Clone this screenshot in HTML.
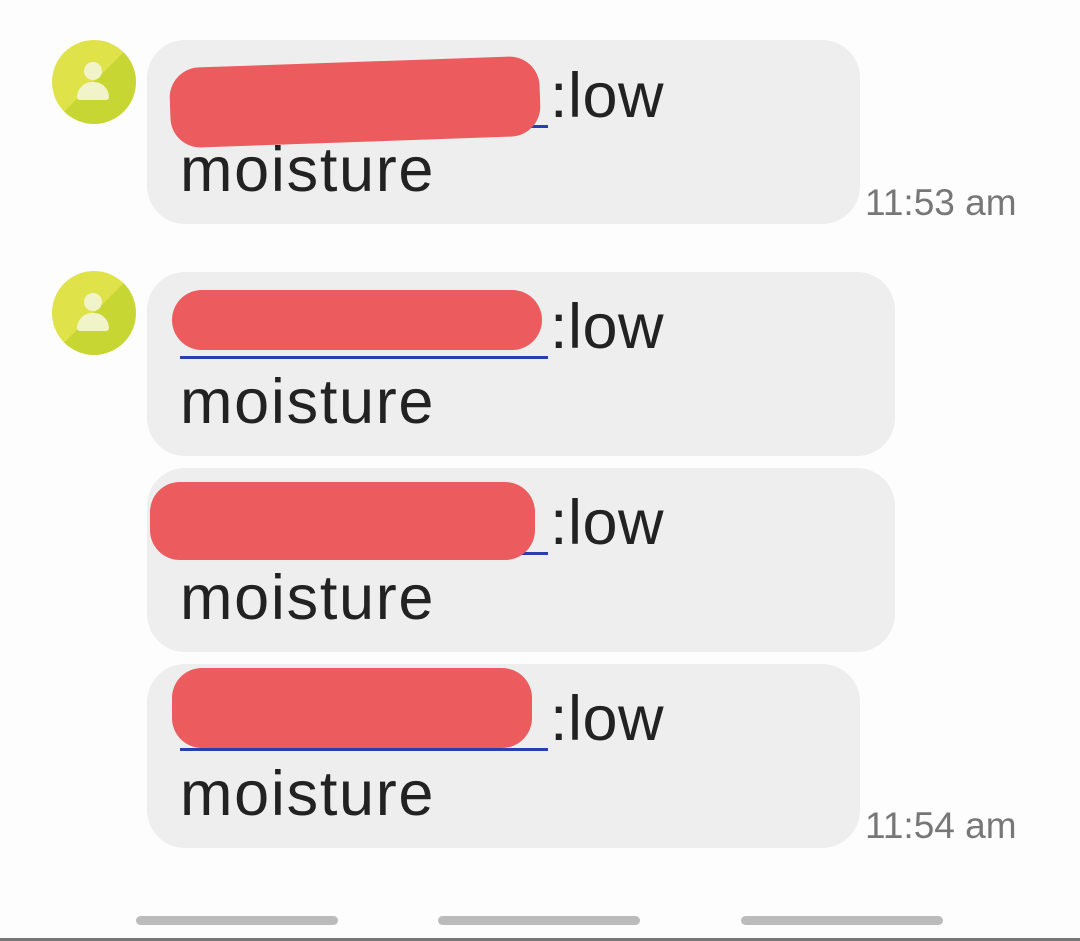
<!DOCTYPE html><html><head><style>
body{margin:0;width:1080px;height:941px;background:#fdfdfd;position:relative;overflow:hidden;font-family:"Liberation Sans",Roboto,sans-serif}
.b{position:absolute;left:147px;height:184px;background:#eeeeee;border-radius:38px}
.t{position:absolute;left:180px;font-size:63px;color:#222;line-height:1;letter-spacing:1.7px}
.ln{position:absolute;left:180px;width:368px;height:3px;background:#2a3fae}
.r{position:absolute;background:#ec5b5d;border-radius:30px}
.ts{position:absolute;left:865px;font-size:37px;color:#777}
.av{position:absolute;left:52px;width:84px;height:84px;border-radius:50%;background:linear-gradient(135deg,#e0e24a 50%,#c8d634 50%);overflow:hidden}
.av i{position:absolute;left:32px;top:22px;width:18px;height:18px;border-radius:50%;background:#f1f3c8}
.av u{position:absolute;left:25px;top:42px;width:32px;height:18px;border-radius:16px 16px 3px 3px;background:#f1f3c8}
.nb{position:absolute;top:916px;width:202px;height:9px;border-radius:5px;background:#bbb}
</style></head><body>
<div class="av" style="top:40px"><i></i><u></u></div>
<div class="av" style="top:271px"><i></i><u></u></div>
<div class="b" style="top:40px;width:713px"></div>
<div class="b" style="top:272px;width:748px"></div>
<div class="b" style="top:468px;width:748px"></div>
<div class="b" style="top:664px;width:713px"></div>
<div class="ln" style="top:125px"></div><div class="ln" style="top:356px"></div><div class="ln" style="top:552px"></div><div class="ln" style="top:748px"></div>
<div class="t" style="left:550px;top:65px;letter-spacing:0.5px">:low</div><div class="t" style="top:139px">moisture</div>
<div class="t" style="left:550px;top:296px;letter-spacing:0.5px">:low</div><div class="t" style="top:371px">moisture</div>
<div class="t" style="left:550px;top:492px;letter-spacing:0.5px">:low</div><div class="t" style="top:567px">moisture</div>
<div class="t" style="left:550px;top:688px;letter-spacing:0.5px">:low</div><div class="t" style="top:763px">moisture</div>
<div class="r" style="left:170px;top:62px;width:370px;height:80px;transform:rotate(-2deg)"></div>
<div class="r" style="left:172px;top:290px;width:370px;height:60px"></div>
<div class="r" style="left:150px;top:482px;width:385px;height:78px"></div>
<div class="r" style="left:172px;top:668px;width:360px;height:80px"></div>
<div class="ts" style="top:182px">11:53 am</div>
<div class="ts" style="top:805px">11:54 am</div>
<div class="nb" style="left:136px"></div><div class="nb" style="left:438px"></div><div class="nb" style="left:741px"></div>
<div style="position:absolute;left:0;top:938px;width:1080px;height:3px;background:#777"></div>
</body></html>
